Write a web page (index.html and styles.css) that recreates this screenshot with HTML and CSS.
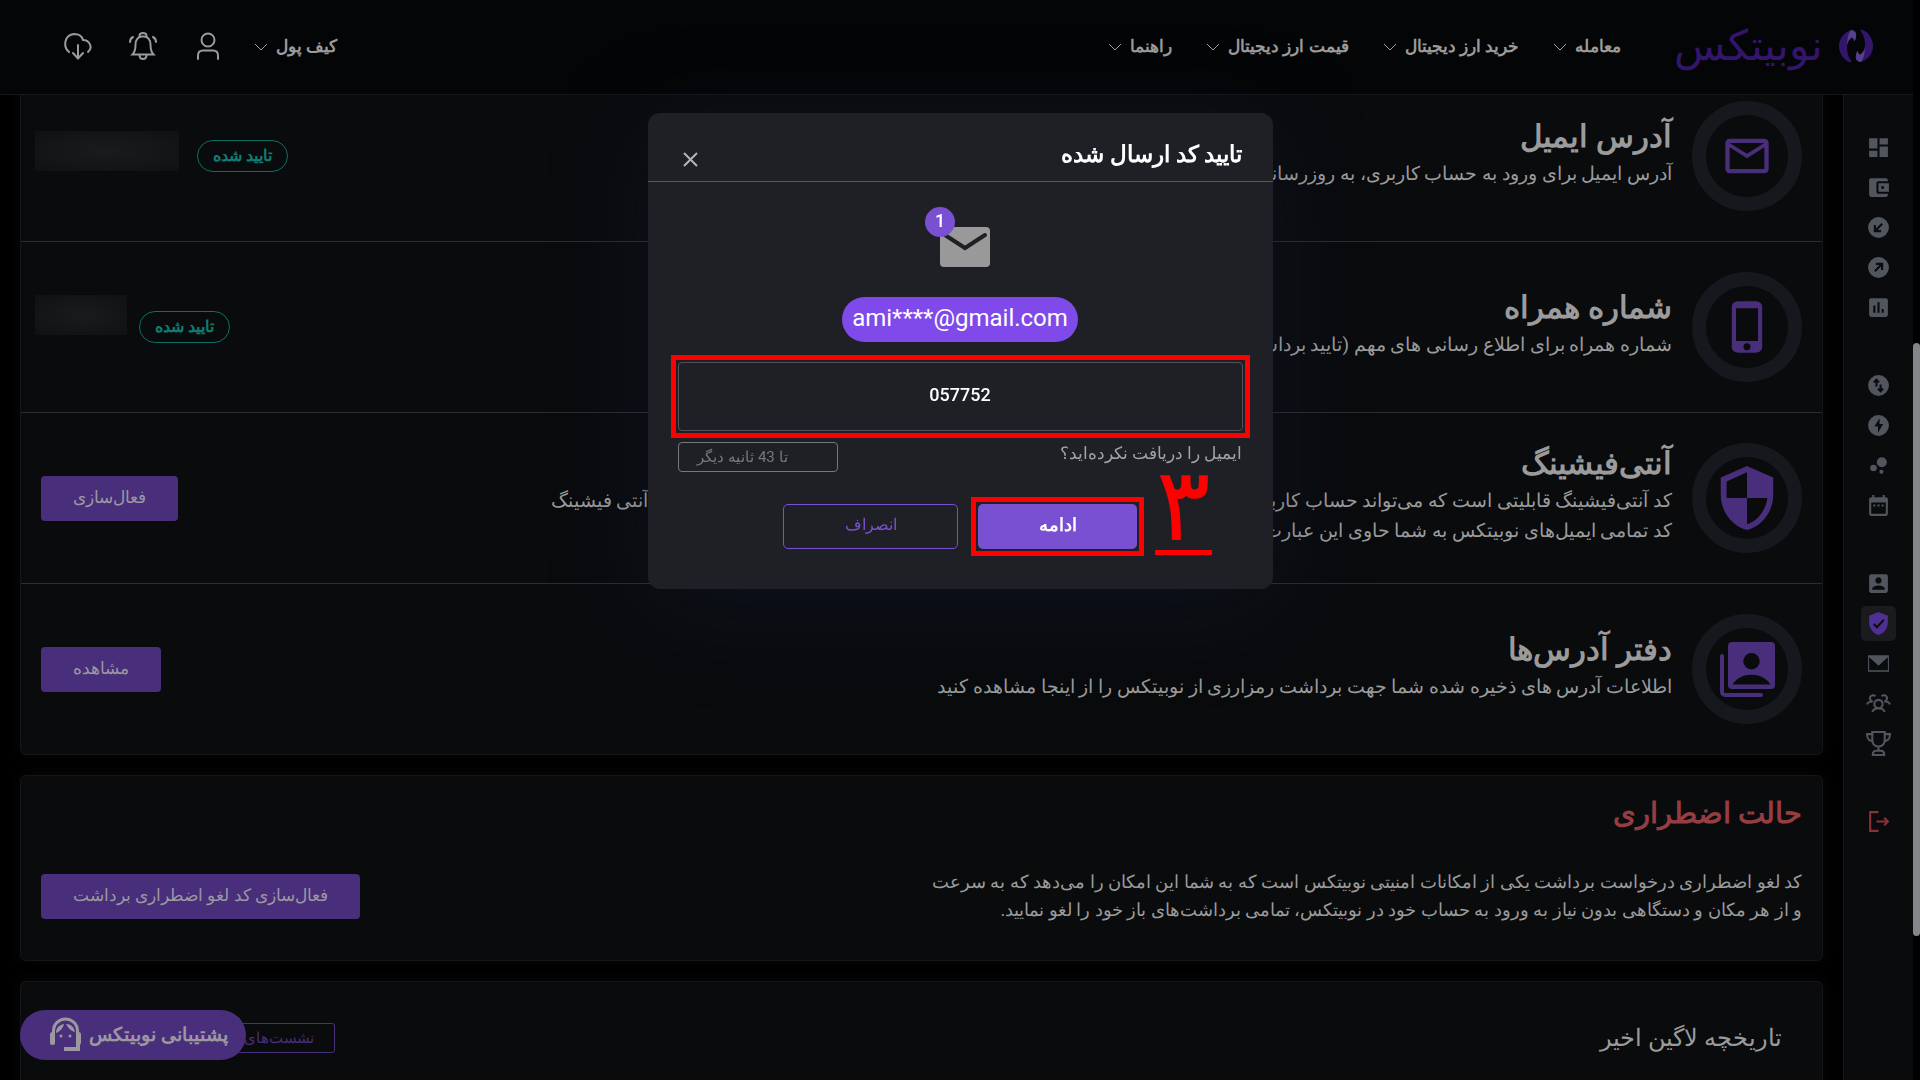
FILE: index.html
```
<!DOCTYPE html>
<html lang="fa" dir="rtl">
  <head>
    <meta charset="utf-8">
    <title>نوبیتکس</title>
    <link rel="stylesheet" href="styles.css">
  </head>
  <body>
    <header class="header">
      <a class="logo" href="#">
        <svg width="34" height="32" viewBox="0 0 34 32">
          <path fill="#34156c" d="M12 0C4 3 0 9 0 16s4 13 10 16h3C9 27 8 22 8 16c0-6 2-11 4-16z"/>
          <path fill="#55408c" d="M12 0c4 0 6 3 5 7 0 2-1 4-2 4 0-3-2-4-3-3-2 2-4 5-4 8 0-7 1-12 4-16z"/>
          <path fill="#34156c" d="M22 32c8-3 12-9 12-16S30 3 24 0h-3c4 5 5 10 5 16 0 6-2 11-4 16z"/>
          <path fill="#55408c" d="M22 32c-4 0-6-3-5-7 0-2 1-4 2-4 0 3 2 4 3 3 2-2 4-5 4-8 0 7-1 12-4 16z"/>
        </svg>
        <span>نوبیتکس</span>
      </a>
      <nav class="nav main-nav">
        <a href="#">معامله <svg class="chevron" viewBox="0 0 14 8"><path d="M1 1l6 6 6-6"/></svg></a>
        <a href="#">خرید ارز دیجیتال <svg class="chevron" viewBox="0 0 14 8"><path d="M1 1l6 6 6-6"/></svg></a>
        <a href="#">قیمت ارز دیجیتال <svg class="chevron" viewBox="0 0 14 8"><path d="M1 1l6 6 6-6"/></svg></a>
        <a href="#">راهنما <svg class="chevron" viewBox="0 0 14 8"><path d="M1 1l6 6 6-6"/></svg></a>
      </nav>
      <div class="nav header-left">
        <a href="#">کیف پول <svg class="chevron" viewBox="0 0 14 8"><path d="M1 1l6 6 6-6"/></svg></a>
        <div class="tools">
          <button type="button" aria-label="حساب">
            <svg viewBox="0 0 28 28"><circle cx="14" cy="8" r="6.5"/><path d="M4 27v-3.500c0-3 2-5 5-5h10c3 0 5 2 5 5V27"/></svg>
          </button>
          <button type="button" aria-label="اعلان">
            <svg viewBox="0 0 28 28"><path d="M3.500 22.500c3-3 3-6 3-10 0-5 3-8 6.500-8h2c3.500 0 6.500 3 6.500 8 0 4 0 7 3 10z"/><path d="M10.500 5V3.500C10.500 2 12 1 14 1s3.500 1 3.500 2.500V5M10.500 23c0 3 1.500 4 3.500 4s3.500-1 3.500-4M1 10c0-2 1-4 3-5M27 10c0-2-1-4-3-5"/></svg>
          </button>
          <button type="button" aria-label="دانلود">
            <svg viewBox="0 0 28 28"><path d="M5 20c-6-5-5-17 5-18 4 0 8 2 9 6 7 0 10 8 5 12M14 13v13M9 21l5 5.500 5-5.500"/></svg>
          </button>
        </div>
      </div>
    </header>

    <div class="layout">
      <aside class="sidebar">
        <div class="side-group">
          <a href="#" aria-label="داشبورد"><svg viewBox="0 0 24 24"><path d="M3 13h8V3H3zM3 21h8v-6H3zM13 21h8V11h-8zM13 3v6h8V3z"/></svg></a>
          <a href="#" aria-label="کیف پول"><svg viewBox="0 0 24 24"><path d="M21 18v1c0 1.100-.9 2-2 2H5c-1.110 0-2-.9-2-2V5c0-1.100.89-2 2-2h14c1.100 0 2 .9 2 2v1h-9c-1.110 0-2 .9-2 2v8c0 1.100.89 2 2 2h9zm-9-2h10V8H12v8zm4-2.500c-.83 0-1.500-.67-1.500-1.500s.67-1.500 1.500-1.500 1.500.67 1.500 1.500-.67 1.500-1.500 1.500z"/></svg></a>
          <a href="#" aria-label="واریز"><svg viewBox="0 0 24 24"><circle cx="12" cy="12" r="10"/><path class="cut" d="M15.500 8.500l-7 7M8.500 9.500v6h6"/></svg></a>
          <a href="#" aria-label="برداشت"><svg viewBox="0 0 24 24"><circle cx="12" cy="12" r="10"/><path class="cut" d="M8.500 15.500l7-7M9.500 8.500h6v6"/></svg></a>
          <a href="#" aria-label="گزارش"><svg viewBox="0 0 24 24"><rect x="3" y="3" width="18" height="18" rx="2"/><path class="cut" d="M8 10v7M12 7v10M16 13.500V17"/></svg></a>
        </div>
        <div class="side-group">
          <a href="#" aria-label="معامله"><svg viewBox="0 0 24 24"><circle cx="12" cy="12" r="10"/><path class="cut" d="M10 13V7M7.500 9L10 6.500 12.500 9M14 11v6M11.500 15l2.500 2.500 2.500-2.500"/></svg></a>
          <a href="#" aria-label="معامله سریع"><svg viewBox="0 0 24 24"><circle cx="12" cy="12" r="10"/><path fill="#090b0d" d="M13 5l-5 8h3.500v6l5-8.500H13z"/></svg></a>
          <a href="#" aria-label="نمودار"><svg viewBox="0 0 24 24"><circle cx="7.200" cy="14.400" r="3.200"/><circle cx="14.800" cy="18" r="2"/><circle cx="15.200" cy="8.800" r="4.800"/></svg></a>
          <a href="#" aria-label="تقویم"><svg viewBox="0 0 24 24"><path d="M9 11H7v2h2zM13 11h-2v2h2zM17 11h-2v2h2zM19 4h-1V2h-2v2H8V2H6v2H5c-1.110 0-2 .9-2 2v14c0 1.100.89 2 2 2h14c1.100 0 2-.9 2-2V6c0-1.100-.9-2-2-2zm0 16H5V9h14z"/></svg></a>
        </div>
        <div class="side-group">
          <a href="#" aria-label="پروفایل"><svg viewBox="0 0 24 24"><path d="M3 5v14c0 1.100.89 2 2 2h14c1.100 0 2-.9 2-2V5c0-1.100-.9-2-2-2H5c-1.110 0-2 .9-2 2zm12 4c0 1.660-1.340 3-3 3s-3-1.340-3-3 1.340-3 3-3 3 1.340 3 3zm-9 8c0-2 4-3.100 6-3.100s6 1.100 6 3.100v1H6z"/></svg></a>
          <a href="#" class="active" aria-label="امنیت"><svg viewBox="0 0 24 24"><path d="M12 1L3 4.500V11c0 5.500 3.800 10.700 9 12 5.200-1.300 9-6.500 9-12V4.500z"/><path class="cut" d="M7.500 12.500l3 3 6.500-7"/></svg></a>
          <a href="#" aria-label="پیام‌ها"><svg viewBox="0 0 24 24"><path fill-rule="evenodd" d="M2 4h20v16H2zM3 6v12.500h18V6l-9 8z"/><path d="M3 5h18l-9 9z"/></svg></a>
          <a href="#" aria-label="معرفی دوستان"><svg class="line" viewBox="0 0 24 24"><circle cx="12" cy="12.500" r="4"/><path d="M6 20c1-2.500 3-3.500 6-3.500s5 1 6 3.500M6.500 10A3 3 0 1 1 9 5M1 13c.5-2 2-3 5-3M17.500 10A3 3 0 1 0 15 5M23 13c-.5-2-2-3-5-3"/></svg></a>
          <a href="#" aria-label="جوایز"><svg class="line" viewBox="0 0 24 24"><path d="M6 1h12v7c0 5-2 7-6 7s-6-2-6-7zM6 3H1c0 4 1 6 5.500 7M18 3h5c0 4-1 6-5.500 7M12 15v4M6.500 23c0-2.500 1.500-4 3.500-4h4c2 0 3.500 1.500 3.500 4z"/></svg></a>
        </div>
        <div class="side-group">
          <a href="#" class="logout" aria-label="خروج"><svg class="line" viewBox="0 0 24 24"><path d="M12 3H4v18h8M10 12h11M17.500 8.500L21 12l-3.500 3.500"/></svg></a>
        </div>
      </aside>

      <main class="main">
        <section class="card">
          <div class="row">
            <div class="ring"><svg width="52" height="52" viewBox="0 0 24 24"><path d="M22 6c0-1.100-.9-2-2-2H4c-1.100 0-2 .9-2 2v12c0 1.100.9 2 2 2h16c1.100 0 2-.9 2-2zm-2 0l-8 5-8-5zm0 12H4V8l8 5 8-5z"/></svg></div>
            <div class="info">
              <h2>آدرس ایمیل</h2>
              <p>آدرس ایمیل برای ورود به حساب کاربری، به روزرسانی اطلاعات و دریافت پیام</p>
            </div>
            <div class="status">
              <span class="badge">تایید شده</span>
              <span class="hidden-value"></span>
            </div>
          </div>
          <div class="row">
            <div class="ring"><svg width="56" height="56" viewBox="0 0 24 24"><path d="M15.500 1h-7C6.500 1 5.500 2 5.500 3.500v17c0 1.500 1 2.500 3 2.500h7c2 0 3-1 3-2.500v-17C18.500 2 17.500 1 15.500 1zM12 22a1.500 1.500 0 1 1 0-3 1.500 1.500 0 0 1 0 3zm4.700-4H7.300V4h9.400z"/></svg></div>
            <div class="info">
              <h2>شماره همراه</h2>
              <p>شماره همراه برای اطلاع رسانی های مهم (تایید برداشت و ورود به حساب)</p>
            </div>
            <div class="status phone">
              <span class="badge">تایید شده</span>
              <span class="hidden-value"></span>
            </div>
          </div>
          <div class="row">
            <div class="ring"><svg width="70" height="70" viewBox="0 0 24 24"><path fill-rule="evenodd" d="M12 1L3 5v6c0 5.550 3.840 10.740 9 12 5.160-1.260 9-6.450 9-12V5zM12 3.200V12H5V6.300zM12 12h7c-.6 4.200-3.300 7.900-7 9z"/></svg></div>
            <div class="info">
              <h2>آنتی‌فیشینگ</h2>
              <p>کد آنتی‌فیشینگ قابلیتی است که می‌تواند حساب کاربری شما را در برابر ایمیل‌های جعلی محافظت کند پس از فعال‌سازی و ثبت عبارت آنتی فیشینگ<br>
              کد تمامی ایمیل‌های نوبیتکس به شما حاوی این عبارت خواهد بود</p>
            </div>
            <button type="button" class="btn">فعال‌سازی</button>
          </div>
          <div class="row">
            <div class="ring"><svg width="55" height="55" viewBox="0 0 55 55"><path fill-rule="evenodd" d="M12 0h39a4 4 0 0 1 4 4v39a4 4 0 0 1-4 4H12a4 4 0 0 1-4-4V4a4 4 0 0 1 4-4zM31.500 11a8 8 0 1 0 0 16.500 8 8 0 0 0 0-16.500zM12.500 42.500h38c-8-13-30-13-38 0z"/><path fill="none" stroke="#482e7b" stroke-width="4" stroke-linecap="round" d="M2 14v36a3 3 0 0 0 3 3h36"/></svg></div>
            <div class="info">
              <h2>دفتر آدرس‌ها</h2>
              <p>اطلاعات آدرس های ذخیره شده شما جهت برداشت رمزارزی از نوبیتکس را از اینجا مشاهده کنید</p>
            </div>
            <button type="button" class="btn">مشاهده</button>
          </div>
        </section>

        <section class="card emergency">
          <h2>حالت اضطراری</h2>
          <div class="emergency-body">
            <p>کد لغو اضطراری درخواست برداشت یکی از امکانات امنیتی نوبیتکس است که به شما این امکان را می‌دهد که به سرعت<br>
            و از هر مکان و دستگاهی بدون نیاز به ورود به حساب خود در نوبیتکس، تمامی برداشت‌های باز خود را لغو نمایید.</p>
            <button type="button" class="btn">فعال‌سازی کد لغو اضطراری برداشت</button>
          </div>
        </section>

        <section class="card history">
          <h3>تاریخچه لاگین اخیر</h3>
          <button type="button" class="btn-outline">نشست‌های فعال</button>
        </section>
      </main>
    </div>

    <button type="button" class="support">
      پشتیبانی نوبیتکس
      <svg width="31" height="34" viewBox="0 0 31 34">
        <path d="M3.500 17v-3C3.500 7 9 2 15.500 2s12 5 12 12v3" fill="none" stroke="#9c98a0" stroke-width="3"/>
        <rect x="0" y="15" width="5" height="13" rx="2.500"/>
        <rect x="26" y="15" width="5" height="13" rx="2.500"/>
        <path d="M28 24v8H14" fill="none" stroke="#9c98a0" stroke-width="4"/>
        <path d="M6 16c0-5 3-8 8-9-1 4-3 7-8 9zM16 7c5 0 8 3 9 8-4-1-7-4-9-8z"/>
        <circle cx="11" cy="19" r="1.500"/>
        <circle cx="20" cy="19" r="1.500"/>
      </svg>
    </button>

    <div class="scrollbar"><div class="thumb"></div></div>

    <div class="modal-layer">
      <form class="modal" role="dialog" aria-labelledby="modal-title">
        <div class="modal-header">
          <h1 id="modal-title">تایید کد ارسال شده</h1>
          <button type="button" class="close" aria-label="بستن"><svg width="15" height="15" viewBox="0 0 15 15"><path d="M1 1l13 13M14 1L1 14"/></svg></button>
        </div>
        <div class="modal-body">
          <div class="mail">
            <svg width="50" height="40" viewBox="0 0 50 40"><rect width="50" height="40" rx="4" fill="#999"/><path d="M5 8l20 13L45 8" fill="none" stroke="#1f2025" stroke-width="4" stroke-linecap="round"/></svg>
            <span class="mail-count">1</span>
          </div>
          <div class="email" dir="ltr">ami****@gmail.com</div>
          <div class="code-box marked">
            <input type="text" class="code" value="057752" dir="ltr" aria-label="کد تایید">
          </div>
          <div class="resend">
            <span>ایمیل را دریافت نکرده‌اید؟</span>
            <button type="button" class="timer" disabled>تا 43 ثانیه دیگر</button>
          </div>
          <div class="actions">
            <div class="marked">
              <button type="submit" class="continue">ادامه</button>
            </div>
            <button type="button" class="cancel">انصراف</button>
          </div>
        </div>
        <span class="step">۳</span>
      </form>
    </div>
  </body>
</html>
```
FILE: styles.css
```
* {
  box-sizing: border-box;
}
body {
  margin: 0;
  height: 100vh;
  overflow: hidden;
  background: #000;
  color: #9b9b9c;
  font-family: Roboto, "Noto Sans";
}
h1, h2, h3, p {
  margin: 0;
}
a {
  color: inherit;
  text-decoration: none;
}
button, input {
  margin: 0;
  padding: 0;
  border: none;
  background: none;
  color: inherit;
  font-family: inherit;
}
button {
  display: block;
  cursor: pointer;
}
svg {
  display: block;
  flex-shrink: 0;
}

/* header */
.header {
  position: fixed;
  top: 0;
  left: 0;
  right: 7px;
  z-index: 2;
  display: flex;
  align-items: center;
  height: 95px;
  padding: 0 40px 2px 64px;
  background: #040506;
  border-bottom: 1px solid #14181c;
}
.logo {
  display: flex;
  align-items: center;
  gap: 16px;
  margin-left: 53px;
  color: #34156c;
  font-size: 42px;
  line-height: 60px;
}
.nav {
  display: flex;
  align-items: center;
  gap: 32px;
  font-size: 17px;
  font-weight: bold;
}
.nav a {
  display: flex;
  align-items: center;
  gap: 8px;
}
.main-nav {
  gap: 34px;
}
.chevron {
  width: 14px;
  height: 8px;
  margin-top: 2px;
  fill: none;
  stroke: #9b9b9c;
}
.header-left {
  margin-right: auto;
}
.tools {
  display: flex;
  gap: 37px;
}
.tools svg {
  width: 28px;
  height: 28px;
  fill: none;
  stroke: #9b9b9c;
  stroke-width: 2;
  stroke-linecap: round;
}

/* sidebar */
.layout {
  display: flex;
  height: 100vh;
  padding-right: 7px;
}
.sidebar {
  display: flex;
  flex-direction: column;
  gap: 43px;
  width: 70px;
  padding-top: 130px;
  background: #090b0d;
  border-left: 1px solid #16191d;
}
.side-group {
  display: flex;
  flex-direction: column;
  align-items: center;
  gap: 5px;
}
.side-group a {
  display: flex;
  align-items: center;
  justify-content: center;
  width: 35px;
  height: 35px;
  border-radius: 5px;
}
.side-group svg {
  width: 25px;
  height: 25px;
  fill: #51565e;
}
.side-group .cut {
  fill: none;
  stroke: #090b0d;
  stroke-width: 2;
}
.side-group .line {
  fill: none;
  stroke: #51565e;
  stroke-width: 2;
}
.side-group .active {
  background: #1a1b1f;
}
.side-group .active svg {
  fill: #4f2f93;
}
.side-group .logout svg {
  stroke: #8e3038;
}

/* cards */
.main {
  flex: 1;
  min-width: 0;
  padding: 70px 20px 0;
}
.card {
  margin-bottom: 20px;
  background: #090b0d;
  border: 1px solid #131518;
  border-radius: 6px;
  box-shadow: 0 0 16px #0a0a0b;
}
.row {
  display: flex;
  align-items: center;
  height: 171px;
  padding: 0 20px;
  border-bottom: 1px solid #2b2d30;
}
.row:last-child {
  height: 170px;
  border-bottom: none;
}
.ring {
  display: flex;
  align-items: center;
  justify-content: center;
  width: 110px;
  height: 110px;
  border: 14px solid #17181d;
  border-radius: 50%;
}
.ring svg {
  fill: #482e7b;
}
.info {
  flex: 1;
  padding: 0 20px 8px;
  white-space: nowrap;
}
.info h2 {
  font-size: 31px;
  line-height: 44px;
}
.info p {
  font-size: 19px;
  line-height: 30px;
}
.status {
  display: flex;
  align-items: center;
  gap: 18px;
  margin-left: -6px;
}
.badge {
  padding: 0 15px;
  border: 1px solid #0e6f66;
  border-radius: 16px;
  color: #0e7d72;
  font-size: 16px;
  font-weight: bold;
  line-height: 30px;
}
.hidden-value {
  width: 144px;
  height: 40px;
  margin-bottom: 10px;
  background: radial-gradient(#191b1e, #101111);
}
.phone {
  gap: 12px;
}
.phone .hidden-value {
  width: 92px;
  margin-bottom: 24px;
}
.btn {
  height: 45px;
  padding: 0 32px 3px;
  background: #482e7b;
  border-radius: 4px;
  color: #9c98a0;
  font-size: 17px;
}
.emergency {
  padding: 15px 20px 36px;
}
.emergency h2 {
  color: #963c43;
  font-size: 29px;
  line-height: 44px;
}
.emergency-body {
  display: flex;
  align-items: center;
  justify-content: space-between;
  margin-top: 33px;
}
.emergency p {
  font-size: 18px;
  line-height: 28px;
}
.history {
  display: flex;
  align-items: center;
  justify-content: space-between;
  height: 180px;
  padding: 41px 40px 107px 168px;
}
.history h3 {
  font-size: 24px;
  font-weight: normal;
}
.btn-outline {
  height: 30px;
  padding: 0 20px;
  border: 1px solid #482e7b;
  border-radius: 3px;
  color: #482e7b;
  font-size: 15px;
}

.support {
  position: fixed;
  left: 20px;
  bottom: 20px;
  z-index: 2;
  display: flex;
  align-items: center;
  gap: 8px;
  height: 50px;
  padding: 0 18px 2px 30px;
  background: #482e7b;
  border-radius: 25px;
  color: #9c98a0;
  font-size: 19px;
  font-weight: bold;
}
.support svg {
  fill: #9c98a0;
}

.scrollbar {
  position: fixed;
  top: 0;
  right: 0;
  bottom: 0;
  width: 7px;
  padding-top: 343px;
  background: #000;
}
.thumb {
  height: 593px;
  background: #86858c;
  border-radius: 4px;
}

/* modal */
.modal-layer {
  position: fixed;
  inset: 0;
  z-index: 3;
  display: flex;
  align-items: flex-start;
  justify-content: center;
  padding-top: 113px;
}
.modal {
  position: relative;
  width: 625px;
  background: #1f2025;
  border-radius: 12px;
  box-shadow: 0 16px 100px rgba(30, 38, 80, 0.25);
  color: #a3a3a5;
}
.modal-header {
  display: flex;
  align-items: center;
  justify-content: space-between;
  height: 69px;
  padding: 14px 30px 0 35px;
  border-bottom: 1px solid #56575b;
}
.modal-header h1 {
  color: #fff;
  font-size: 23px;
}
.close {
  margin-top: 10px;
}
.close path {
  stroke: #b5b5b7;
  stroke-width: 2;
}
.modal-body {
  display: flex;
  flex-direction: column;
  align-items: center;
  padding: 25px 30px 40px;
}
.mail {
  position: relative;
  width: 70px;
  padding: 20px 5px 0 15px;
}
.mail-count {
  position: absolute;
  top: 0;
  left: 0;
  width: 30px;
  height: 30px;
  background: #7950d2;
  border-radius: 50%;
  color: #fff;
  font-size: 18px;
  font-weight: 500;
  line-height: 28px;
  text-align: center;
}
.email {
  height: 45px;
  margin-top: 30px;
  padding: 0 10px;
  background: #804aeb;
  border-radius: 23px;
  color: #fff;
  font-size: 24px;
  line-height: 42px;
}
.marked {
  outline: 5px solid #f00;
  outline-offset: 2px;
}
.code-box {
  width: 100%;
  margin-top: 20px;
}
.code {
  display: block;
  width: 100%;
  height: 69px;
  padding-bottom: 4px;
  border: 1px solid #50535a;
  border-radius: 4px;
  color: #fff;
  font-size: 18px;
  font-weight: 500;
  text-align: center;
}
.resend {
  display: flex;
  align-items: flex-start;
  justify-content: space-between;
  width: 100%;
  margin-top: 11px;
  font-size: 17px;
  line-height: 22px;
}
.timer {
  width: 160px;
  height: 30px;
  padding-right: 30px;
  border: 1px solid #77787c;
  border-radius: 4px;
  color: #77787c;
  font-size: 15px;
}
.actions {
  display: flex;
  gap: 20px;
  margin-top: 32px;
}
.actions button {
  height: 45px;
  padding-bottom: 4px;
  border-radius: 5px;
}
.continue {
  width: 159px;
  background: #7950d2;
  color: #fff;
  font-size: 18px;
  font-weight: bold;
}
.cancel {
  width: 175px;
  border: 1px solid #7950d2;
  color: #7950d2;
  font-size: 16px;
}
.step {
  position: absolute;
  left: 507px;
  top: 337px;
  width: 57px;
  height: 105px;
  border-bottom: 5px solid #f00;
  color: #f00;
  font-size: 102px;
  line-height: 110px;
  text-align: center;
}
```
